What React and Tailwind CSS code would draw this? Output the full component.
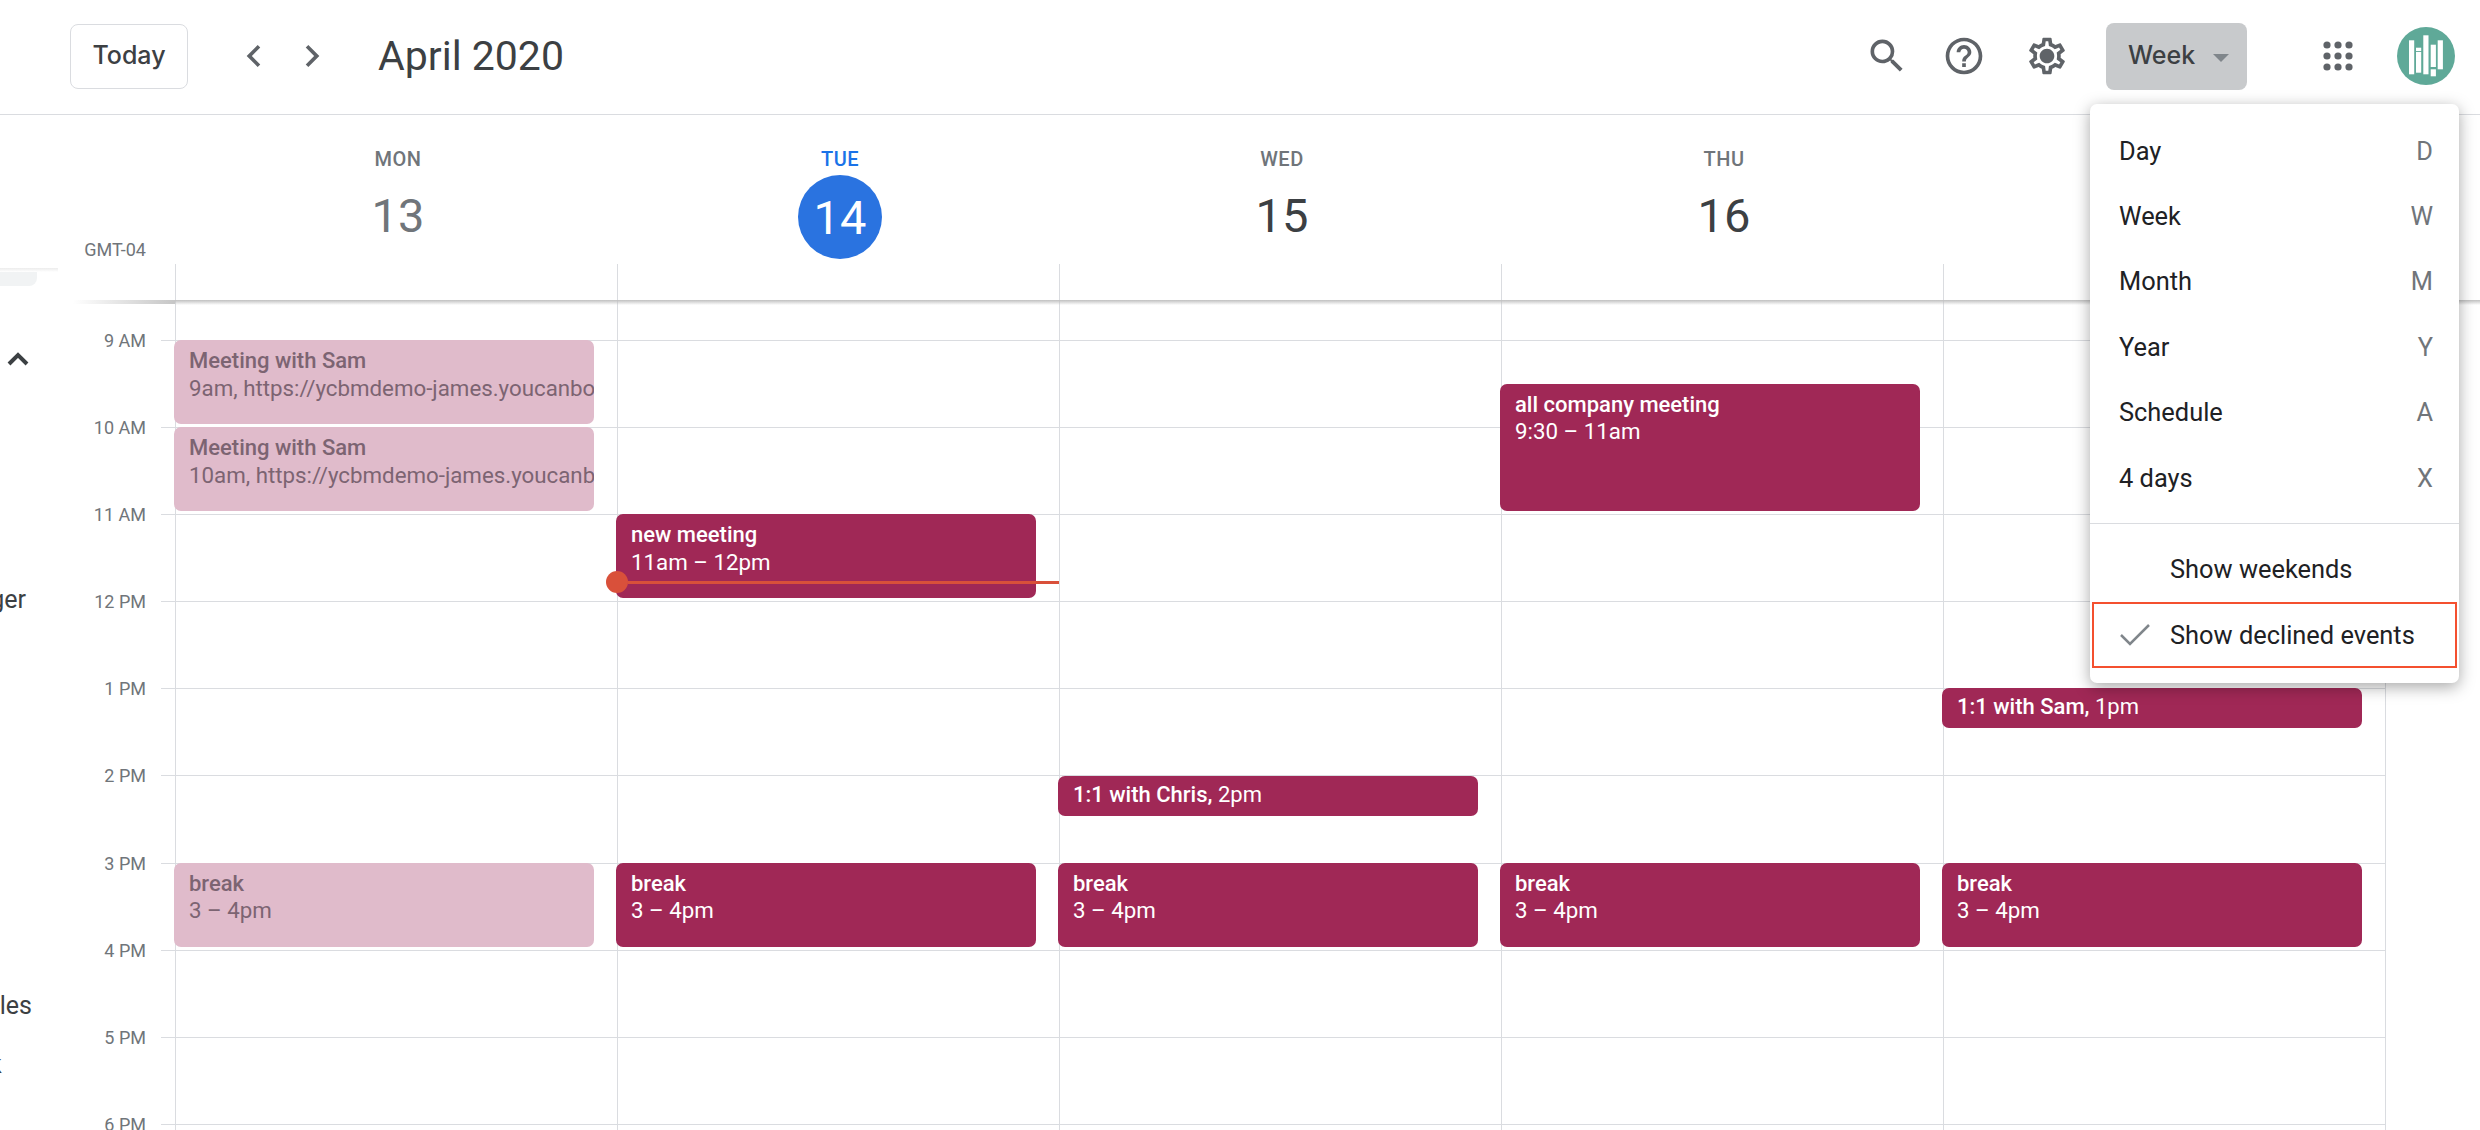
import React from 'react';

const HOUR = 87.1;
const GRID_TOP = 40;

const hours = ['9 AM', '10 AM', '11 AM', '12 PM', '1 PM', '2 PM', '3 PM', '4 PM', '5 PM', '6 PM'];

const days = [
    {
        name: 'MON', date: '13',
        events: [
            { title: 'Meeting with Sam', time: '9am, https://ycbmdemo-james.youcanbook.me', start: 9, faded: true },
            { title: 'Meeting with Sam', time: '10am, https://ycbmdemo-james.youcanbook.me', start: 10, faded: true },
            { title: 'break', time: '3 – 4pm', start: 15, faded: true },
        ],
    },
    {
        name: 'TUE', date: '14', today: true,
        events: [
            { title: 'new meeting', time: '11am – 12pm', start: 11 },
            { title: 'break', time: '3 – 4pm', start: 15 },
        ],
    },
    {
        name: 'WED', date: '15',
        events: [
            { title: '1:1 with Chris,', time: '2pm', start: 14, short: true },
            { title: 'break', time: '3 – 4pm', start: 15 },
        ],
    },
    {
        name: 'THU', date: '16',
        events: [
            { title: 'all company meeting', time: '9:30 – 11am', start: 9.5, tall: true },
            { title: 'break', time: '3 – 4pm', start: 15 },
        ],
    },
    {
        // heading of this day is behind the view menu
        name: 'FRI', date: '17', covered: true,
        events: [
            { title: '1:1 with Sam,', time: '1pm', start: 13, short: true },
            { title: 'break', time: '3 – 4pm', start: 15 },
        ],
    },
];

const viewOptions = [
    ['Day', 'D'],
    ['Week', 'W'],
    ['Month', 'M'],
    ['Year', 'Y'],
    ['Schedule', 'A'],
    ['4 days', 'X'],
];

const Icon = ({ d, className = '' }) => (
    <svg viewBox="0 0 24 24" className={`w-[44px] h-[44px] fill-[#5f6368] shrink-0 ${className}`}>
        <path d={d} />
    </svg>
);

const Avatar = () => (
    <svg viewBox="0 0 58 58" className="w-[58px] h-[58px] shrink-0 ml-[37px]">
        <circle cx="29" cy="29" r="29" fill="#5fa998" />
        <g fill="#fff">
            <rect x="12" y="13.3" width="5.2" height="34" />
            <rect x="19" y="20.7" width="5.2" height="3.4" />
            <rect x="19" y="25" width="5.2" height="20.7" />
            <rect x="26.3" y="8.3" width="5.2" height="39" />
            <rect x="33.7" y="17.7" width="5.2" height="22.3" />
            <rect x="33.7" y="42.3" width="5.2" height="7" />
            <rect x="40.7" y="13.3" width="5.2" height="29" />
        </g>
    </svg>
);

const AppsIcon = () => (
    <svg viewBox="0 0 44 44" className="w-[44px] h-[44px] fill-[#5f6368] shrink-0 ml-[69px]">
        {[11, 22, 33].map((cy) =>
            [11, 22, 33].map((cx) => <circle key={`${cx}-${cy}`} cx={cx} cy={cy} r="3.6" />)
        )}
    </svg>
);

const Header = () => (
    <header className="h-[115px] border-b border-[#dadce0] flex items-center pl-[70px] pb-[2px]">
        <button className="w-[118px] h-[65px] border border-[#dadce0] rounded-[8px] font-['Inter',sans-serif] text-[25px] font-medium text-[#3c4043]">
            Today
        </button>
        <Icon className="ml-[44px]" d="M15.41 7.41L14 6l-6 6 6 6 1.41-1.41L10.83 12z" />
        <Icon className="ml-[14px]" d="M8.59 16.59L10 18l6-6-6-6-1.41 1.41L13.17 12z" />
        <h1 className="ml-[44px] mt-[2px] text-[41px] font-normal text-[#3c4043]">April 2020</h1>

        <div className="ml-auto flex items-center pr-[25px]">
            <Icon d="M15.5 14h-.79l-.28-.27A6.471 6.471 0 0 0 16 9.5 6.5 6.5 0 1 0 9.5 16c1.61 0 3.09-.59 4.23-1.57l.27.28v.79l5 4.99L20.49 19l-4.99-5zm-6 0C7.01 14 5 11.99 5 9.5S7.01 5 9.5 5 14 7.01 14 9.5 11.99 14 9.5 14z" />
            <Icon className="ml-[33px]" d="M11 18h2v-2h-2v2zm1-16C6.48 2 2 6.48 2 12s4.48 10 10 10 10-4.48 10-10S17.52 2 12 2zm0 18c-4.41 0-8-3.59-8-8s3.59-8 8-8 8 3.59 8 8-3.59 8-8 8zm0-14c-2.21 0-4 1.79-4 4h2c0-1.1.9-2 2-2s2 .9 2 2c0 2-3 1.75-3 5h2c0-2.25 3-2.5 3-5 0-2.21-1.79-4-4-4z" />
            <Icon className="ml-[39px]" d="M19.43 12.98c.04-.32.07-.64.07-.98 0-.34-.03-.66-.07-.98l2.11-1.65c.19-.15.24-.42.12-.64l-2-3.46c-.09-.16-.26-.25-.44-.25-.06 0-.12.01-.17.03l-2.49 1c-.52-.4-1.08-.73-1.69-.98l-.38-2.65C14.46 2.18 14.25 2 14 2h-4c-.25 0-.46.18-.49.42l-.38 2.65c-.61.25-1.17.59-1.69.98l-2.49-1c-.06-.02-.12-.03-.18-.03-.17 0-.34.09-.43.25l-2 3.46c-.13.22-.07.49.12.64l2.11 1.65c-.04.32-.07.65-.07.98 0 .33.03.66.07.98l-2.11 1.65c-.19.15-.24.42-.12.64l2 3.46c.09.16.26.25.44.25.06 0 .12-.01.17-.03l2.49-1c.52.4 1.08.73 1.69.98l.38 2.65c.03.24.24.42.49.42h4c.25 0 .46-.18.49-.42l.38-2.65c.61-.25 1.17-.59 1.69-.98l2.49 1c.06.02.12.03.18.03.17 0 .34-.09.43-.25l2-3.46c.12-.22.07-.49-.12-.64l-2.11-1.65zm-1.98-1.71c.04.31.05.52.05.73 0 .21-.02.43-.05.73l-.14 1.13.89.7 1.08.84-.7 1.21-1.27-.51-1.04-.42-.9.68c-.43.32-.84.56-1.25.73l-1.06.43-.16 1.13-.2 1.35h-1.4l-.19-1.35-.16-1.13-1.06-.43c-.43-.18-.83-.41-1.23-.71l-.91-.7-1.06.43-1.27.51-.7-1.21 1.08-.84.89-.7-.14-1.13c-.03-.31-.05-.54-.05-.74s.02-.43.05-.73l.14-1.13-.89-.7-1.08-.84.7-1.21 1.27.51 1.04.42.9-.68c.43-.32.84-.56 1.25-.73l1.06-.43.16-1.13.2-1.35h1.39l.19 1.35.16 1.13 1.06.43c.43.18.83.41 1.23.71l.91.7 1.06-.43 1.27-.51.7 1.21-1.07.85-.89.7.14 1.13zM12 8c-2.21 0-4 1.79-4 4s1.79 4 4 4 4-1.79 4-4-1.79-4-4-4z" />
            <button className="ml-[37px] w-[141px] h-[67px] rounded-[8px] bg-[#c8cacc] flex items-center pl-[22px] font-['Inter',sans-serif] text-[25px] font-medium text-[#3c4043]">
                Week
                <span className="ml-[18px] mt-[3px] w-0 h-0 border-x-[8px] border-x-transparent border-t-[8px] border-t-[#80868b]" />
            </button>
            <AppsIcon />
            <Avatar />
        </div>
    </header>
);

const DayHeading = ({ day }) => (
    <div className="w-[442px] flex flex-col items-center pt-[30px]">
        <span className={`text-[20px] leading-[28px] font-medium tracking-[0.5px] ${day.today ? 'text-[#1a73e8]' : 'text-[#70757a]'}`}>
            {day.name}
        </span>
        {day.today ? (
            <span className="mt-[2px] w-[84px] h-[84px] rounded-full bg-[#2a73e0] text-white flex items-center justify-center text-[47px] leading-none">
                {day.date}
            </span>
        ) : (
            <span className={`h-[84px] flex items-center text-[47px] leading-none ${day.name === 'MON' ? 'text-[#70757a]' : 'text-[#3c4043]'}`}>
                {day.date}
            </span>
        )}
    </div>
);

const EventCard = ({ event }) => {
    const top = GRID_TOP + (event.start - 9) * HOUR;
    let height = 84;
    if (event.short) height = 40;
    if (event.tall) height = 127;
    const colours = event.faded ? 'bg-[#e0bbcb] text-[#7c6472]' : 'bg-[#a02856] text-white';

    if (event.short) {
        return (
            <div
                className={`absolute left-[-2px] w-[420px] rounded-[7px] pl-[15px] text-[22px] leading-[38px] whitespace-nowrap overflow-hidden ${colours}`}
                style={{ top, height }}
            >
                <span className="font-medium">{event.title}</span> {event.time}
            </div>
        );
    }

    return (
        <div
            className={`absolute left-[-2px] w-[420px] rounded-[7px] pl-[15px] pt-[7px] text-[22px] leading-[27.5px] whitespace-nowrap overflow-hidden ${colours}`}
            style={{ top, height }}
        >
            <div className="font-medium">{event.title}</div>
            <div className="text-[22.3px]">{event.time}</div>
        </div>
    );
};

const DayColumn = ({ day, index }) => (
    <div className="relative w-[442px] border-l border-[#dadce0]">
        <div style={{ height: GRID_TOP }} />
        {hours.map((hour) => (
            <div key={hour} className="border-t border-[#dadce0]" style={{ height: HOUR }} />
        ))}
        {day.events.map((event) => (
            <EventCard key={event.title + event.start} event={event} />
        ))}
        {index === 1 && (
            <div className="absolute left-[-12px] top-[271px] w-[454px] flex items-center">
                <span className="w-[22px] h-[22px] rounded-full bg-[#d9503a] shrink-0" />
                <span className="flex-1 h-[3px] bg-[#d9503a]" />
            </div>
        )}
    </div>
);

const TimeGutter = () => (
    <div className="w-[175px] shrink-0 text-[#70757a] text-[18px]">
        <div style={{ height: GRID_TOP }} />
        {hours.map((hour) => (
            <div key={hour} className="flex items-start" style={{ height: HOUR }}>
                <span className="w-[146px] text-right leading-none -mt-[8px]">{hour}</span>
                <span className="ml-[15px] w-[14px] h-[1px] bg-[#dadce0]" />
            </div>
        ))}
    </div>
);

const ViewMenu = () => (
    <div className="absolute left-[2090px] top-[104px] w-[369px] h-[579px] bg-white rounded-[7px] shadow-[0_4px_16px_rgba(0,0,0,0.35)] z-20 pt-[14px] text-[25.4px] text-[#202124]">
        {viewOptions.map(([label, key]) => (
            <div key={label} className="h-[65.4px] flex items-center justify-between pl-[29px] pr-[26px]">
                <span>{label}</span>
                <span className="text-[#70757a]">{key}</span>
            </div>
        ))}
        <div className="mt-[13px] border-t border-[#dadce0] pt-[12px]">
            <div className="h-[66px] flex items-center pl-[80px]">Show weekends</div>
            <div className="mx-[2px] h-[66px] flex items-center border-2 border-[#f4502f]">
                <svg viewBox="0 0 30 22" className="ml-[26px] w-[30px] h-[22px] fill-none stroke-[#80868b] stroke-[2.5]">
                    <path d="M1 11l9 9L29 1" />
                </svg>
                <span className="ml-[20px]">Show declined events</span>
            </div>
        </div>
    </div>
);

// bit of the side panel that sticks out at the left edge
const SidePanelEdge = () => (
    <div className="absolute left-0 top-[268px] w-[60px] h-[862px] overflow-hidden text-[25px] text-[#3c4043] z-10">
        <div className="w-[58px] h-[4px] bg-gradient-to-b from-[#ececec] to-white" />
        <div className="w-[37px] h-[14px] bg-[#f1f3f4] rounded-br-[8px]" />
        <svg viewBox="0 0 24 24" className="ml-[6px] mt-[61px] w-[24px] h-[24px] fill-none stroke-[#3c4043] stroke-[4]">
            <path d="M3 17l9-9 9 9" />
        </svg>
        <div className="mt-[214px] w-[26px] flex justify-end leading-[30px]">ger</div>
        <div className="mt-[376px] w-[32px] flex justify-end leading-[30px]">les</div>
        <div className="mt-[29px] -ml-[11px] leading-[30px]">k</div>
    </div>
);

const App = () => {
    return (
        <div className="relative w-[2480px] h-[1130px] overflow-hidden bg-white font-['Roboto',sans-serif]">
            <Header />

            <div className="flex h-[149px]">
                <div className="w-[177px] shrink-0 flex items-end justify-end pr-[31px] pb-[2px] text-[18px] leading-[24px] text-[#70757a]">
                    GMT-04
                </div>
                {days.filter((day) => !day.covered).map((day) => (
                    <DayHeading key={day.name} day={day} />
                ))}
            </div>

            <div className="relative flex h-[36px] pl-[175px]">
                {days.map((day) => (
                    <div key={day.name} className="w-[442px] border-l border-[#dadce0]" />
                ))}
                <div className="border-l border-[#dadce0]" />
                {/* soft shadow under the all-day strip, fades out towards the side panel */}
                <div className="absolute left-[73px] top-full w-[102px] h-[4px] bg-gradient-to-r from-white to-[#c6c6c6] z-[1]" />
                <div className="absolute left-[175px] right-0 top-full h-[5px] bg-gradient-to-b from-[#c0c0c0] to-white/0 z-[1]" />
            </div>

            <div className="flex">
                <TimeGutter />
                {days.map((day, index) => (
                    <DayColumn key={day.name} day={day} index={index} />
                ))}
                <div className="border-l border-[#dadce0]" />
            </div>

            <SidePanelEdge />
            <ViewMenu />
        </div>
    );
};

export default App;
